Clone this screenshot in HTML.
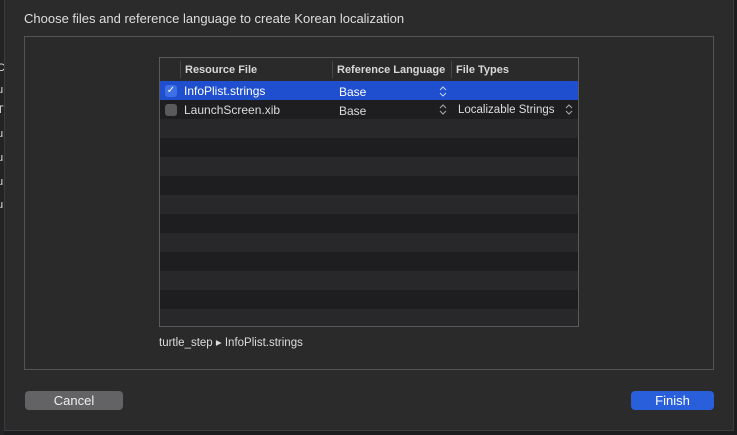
<!DOCTYPE html>
<html><head><meta charset="utf-8"><style>
*{margin:0;padding:0;box-sizing:border-box}
body{width:737px;height:435px;background:#1c1c1e;position:relative;overflow:hidden;font-family:"Liberation Sans",sans-serif;color:#dcdcdc}
.strip{position:absolute;left:0;top:0;width:4px;height:435px;background:#232325;overflow:hidden}
.strip span{position:absolute;left:-3px;font-size:11px;color:#ddd}
.dlg{position:absolute;left:4px;top:0;width:730px;height:431px;background:#2b2b2c;border:1px solid #3c3c3e;border-top:none}
.title{position:absolute;left:24px;top:11px;font-size:13px;color:#dedede}
.box{position:absolute;left:24px;top:36px;width:690px;height:334px;border:1px solid #545456;background:#2a2a2b}
.tbl{position:absolute;left:159px;top:57px;width:420px;height:270px;border:1px solid #5a5a5c;background:#1e1e20;overflow:hidden}
.hdr{position:absolute;left:0;top:0;width:100%;height:24px;background:#2a2a2b;font-size:11px;font-weight:bold;color:#d8d8d8}
.hdr span{position:absolute;top:6px}
.sep{position:absolute;top:3px;width:1px;height:17px;background:#474749}
.row{position:absolute;left:0;width:100%;height:19px;font-size:12px}
.row span{position:absolute;top:3px}
.light{background:#28282a}
.sel{background:#1f4fcf;color:#fff}
.chk{position:absolute;left:5px;top:4px;width:12px;height:12px;border-radius:3px;background:#5a5a5c}
.path{position:absolute;left:159px;top:335px;font-size:11.5px;color:#dcdcdc}
.btn{position:absolute;top:391px;height:19px;border-radius:4px;font-size:13px;text-align:center;line-height:19px;color:#eee}
</style></head><body>
<div class="strip"><span style="top:62px">C</span><span style="top:84px">u</span><span style="top:104px">T</span><span style="top:128px">u</span><span style="top:152px">u</span><span style="top:176px">u</span><span style="top:199px">u</span></div>
<div class="dlg"></div>
<div class="title">Choose files and reference language to create Korean localization</div>
<div class="box"></div>
<div class="tbl">
<div class="hdr"><div class="sep" style="left:20px"></div><span style="left:25px">Resource File</span><div class="sep" style="left:172px"></div><span style="left:177px">Reference Language</span><div class="sep" style="left:291px"></div><span style="left:296px">File Types</span></div>
<div class="row sel" style="top:23px"><div class="chk" style="background:#3d6fe6;color:#fff;font-size:10px;line-height:12px;text-align:center">✓</div><span style="left:24px">InfoPlist.strings</span><span style="left:179px;top:4px">Base</span><svg style="position:absolute;left:279px;top:5px" width="8" height="11"><path d="M1 4L4 1L7 4M1 7L4 10L7 7" fill="none" stroke="#c8d4f4" stroke-width="1"/></svg></div>
<div class="row" style="top:42px"><div class="chk"></div><span style="left:24px">LaunchScreen.xib</span><span style="left:179px;top:4px">Base</span><svg style="position:absolute;left:279px;top:4px" width="8" height="11"><path d="M1 4L4 1L7 4M1 7L4 10L7 7" fill="none" stroke="#aaa" stroke-width="1"/></svg><span style="left:298px;top:4px;font-size:11.5px">Localizable Strings</span><svg style="position:absolute;left:405px;top:4px" width="8" height="11"><path d="M1 4L4 1L7 4M1 7L4 10L7 7" fill="none" stroke="#aaa" stroke-width="1"/></svg></div>
<div class="row light" style="top:61px"></div>
<div class="row light" style="top:99px"></div>
<div class="row light" style="top:137px"></div>
<div class="row light" style="top:175px"></div>
<div class="row light" style="top:213px"></div>
<div class="row light" style="top:251px"></div>
</div>
<div class="path">turtle_step ▸ InfoPlist.strings</div>
<div class="btn" style="left:25px;width:98px;background:#636366">Cancel</div>
<div class="btn" style="left:631px;width:83px;background:#2a5fdc;color:#fff">Finish</div>
</body></html>
